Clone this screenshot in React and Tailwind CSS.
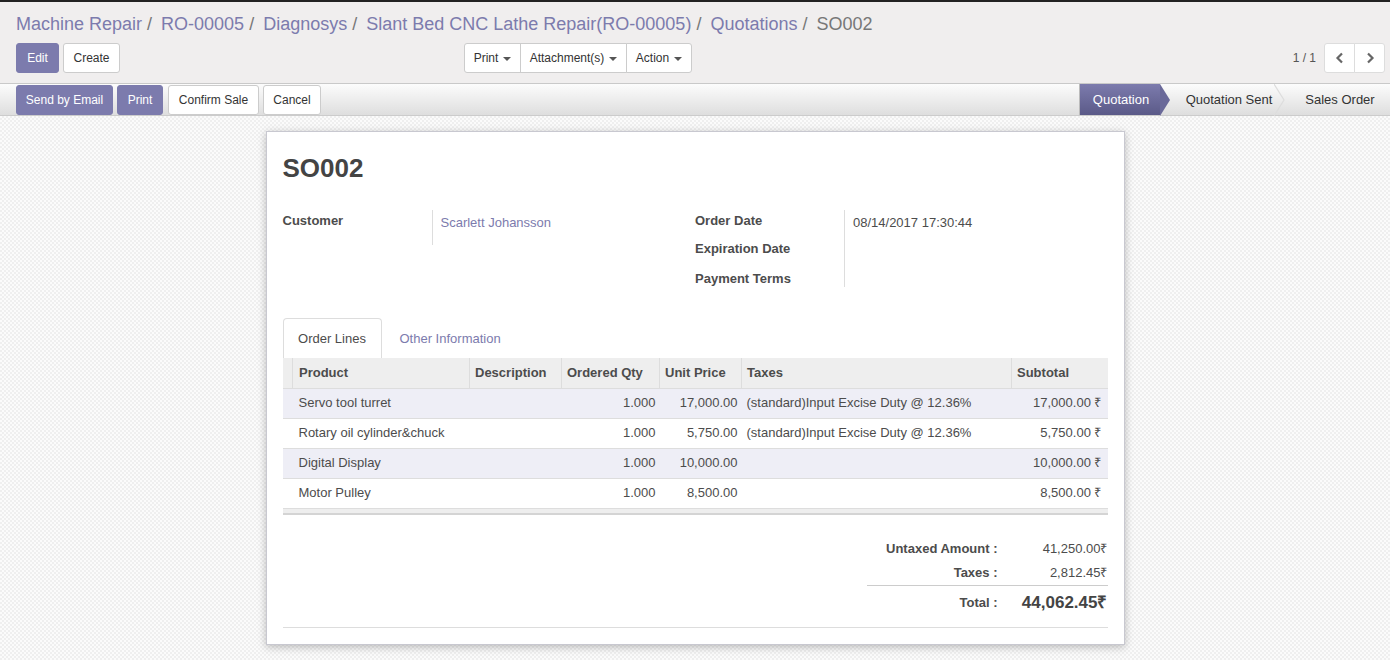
import React from "react";

function Caret() {
  return <span className="ml-[5px] inline-block h-0 w-0 border-x-[4px] border-t-[4px] border-x-transparent border-t-[#555] align-middle" />;
}

function Btn({ primary, children, className = "" }) {
  return (
    <button
      className={
        "h-[30px] whitespace-nowrap rounded-[3px] border text-center text-[12px] leading-none " +
        (primary
          ? "border-[#7c7bad] bg-[#7c7bad] text-white "
          : "border-[#ccc] bg-white text-[#333] ") +
        className
      }
    >
      {children}
    </button>
  );
}

const rows = [
  ["Servo tool turret", "1.000", "17,000.00", "(standard)Input Excise Duty @ 12.36%", "17,000.00 ₹", true],
  ["Rotary oil cylinder&chuck", "1.000", "5,750.00", "(standard)Input Excise Duty @ 12.36%", "5,750.00 ₹", false],
  ["Digital Display", "1.000", "10,000.00", "", "10,000.00 ₹", true],
  ["Motor Pulley", "1.000", "8,500.00", "", "8,500.00 ₹", false],
];

export default function App() {
  return (
    <div
      className="flex h-[660px] w-[1390px] flex-col overflow-hidden text-[13px] text-[#4c4c4c]"
      style={{ fontFamily: '"Liberation Sans", Arial, sans-serif' }}
    >
      {/* control panel */}
      <div className="border-t-2 border-b border-t-[#222] border-b-[#c9c9c9] bg-[#f0eeee] pt-[9px] pr-[5px] pb-[10px] pl-[16px]">
        <div className="flex h-[26px] items-center text-[18px] leading-[26px]">
          {["Machine Repair", "RO-00005", "Diagnosys", "Slant Bed CNC Lathe Repair(RO-00005)", "Quotations"].map((t) => (
            <React.Fragment key={t}>
              <span className="text-[#7c7bad]">{t}</span>
              <span className="mr-[9px] ml-[5px] text-[#777]">/</span>
            </React.Fragment>
          ))}
          <span className="text-[#777]">SO002</span>
        </div>
        <div className="mt-[6px] flex h-[30px] items-center">
          <div className="flex w-[448px] gap-[4px]">
            <Btn primary className="w-[43px]">Edit</Btn>
            <Btn className="w-[57px]">Create</Btn>
          </div>
          <div className="flex">
            <button className="h-[30px] w-[57px] rounded-l-[3px] border border-[#ccc] bg-white text-[12px] text-[#333]">
              Print<Caret />
            </button>
            <button className="-ml-px h-[30px] w-[107px] border border-[#ccc] bg-white text-[12px] text-[#333]">
              Attachment(s)<Caret />
            </button>
            <button className="-ml-px h-[30px] w-[66px] rounded-r-[3px] border border-[#ccc] bg-white text-[12px] text-[#333]">
              Action<Caret />
            </button>
          </div>
          <div className="ml-auto flex items-center">
            <span className="mr-[8px] text-[12px] text-[#555]">1 / 1</span>
            <div className="flex">
              <button className="flex h-[30px] w-[31px] items-center justify-center rounded-l-[3px] border border-[#ddd] bg-white">
                <svg width="10" height="12" viewBox="0 0 10 12"><path d="M7 1.5 L2.5 6 L7 10.5" stroke="#666" strokeWidth="2.2" fill="none" /></svg>
              </button>
              <button className="-ml-px flex h-[30px] w-[31px] items-center justify-center rounded-r-[3px] border border-[#ddd] bg-white">
                <svg width="10" height="12" viewBox="0 0 10 12"><path d="M3 1.5 L7.5 6 L3 10.5" stroke="#666" strokeWidth="2.2" fill="none" /></svg>
              </button>
            </div>
          </div>
        </div>
      </div>

      {/* status bar */}
      <div className="flex h-[32px] items-center border-b border-[#ccc] bg-[linear-gradient(#fcfcfc,#dedede)] pl-[16px]">
        <div className="flex gap-[4px]">
          <Btn primary className="w-[97px]">Send by Email</Btn>
          <Btn primary className="w-[46px]">Print</Btn>
          <Btn className="ml-[1px] w-[91px]">Confirm Sale</Btn>
          <Btn className="w-[58px]">Cancel</Btn>
        </div>
        <div className="ml-auto flex h-full items-stretch text-[13px]">
          <div className="relative flex w-[81px] items-center justify-center border-l border-[#bbb] bg-[linear-gradient(#7c7bad,#5b5a88)] pl-[2px] text-white">
            Quotation
            <span className="absolute top-0 -right-[10px] z-10 h-0 w-0 border-y-[16px] border-l-[10px] border-y-transparent border-l-[#6a6999]" />
          </div>
          <div className="relative flex w-[120px] items-center justify-center pl-[18px] text-[#333]">
            Quotation Sent
            <svg className="absolute top-0 -right-[6px] z-10" width="12" height="32" viewBox="0 0 12 32">
              <path d="M0 0 L10 16 L0 32" stroke="#ddd" strokeWidth="1.2" fill="none" />
            </svg>
          </div>
          <div className="flex w-[110px] items-center justify-center pl-[10px] text-[#333]">Sales Order</div>
        </div>
      </div>

      {/* sheet area */}
      <div className="flex-1 bg-[image:repeating-conic-gradient(#efefef_0%_25%,#fbfbfb_0%_50%)] bg-[length:4px_4px] pt-[15px]">
        <div className="mx-auto h-[514px] w-[859px] border border-[#c8c8d0] bg-white px-[16px] pt-[19px] shadow-[0_2px_8px_rgba(0,0,0,0.25)]">
          <h1 className="text-[26px] leading-[34px] font-bold text-[#444]">SO002</h1>

          <div className="mt-[25px] grid grid-cols-2">
            <div className="flex">
              <div className="w-[149px] pt-[1px] font-bold text-[#4c4c4c]">Customer</div>
              <div className="h-[35px] border-l border-[#ddd] pt-[3px] pl-[8px] text-[#7c7bad]">Scarlett Johansson</div>
            </div>
            <div className="flex">
              <div className="w-[149px] font-bold">
                <div className="h-[29px] pt-[1px]">Order Date</div>
                <div className="h-[30px]">Expiration Date</div>
                <div className="h-[18px]">Payment Terms</div>
              </div>
              <div className="h-[77px] border-l border-[#ddd] pt-[3px] pl-[8px]">08/14/2017 17:30:44</div>
            </div>
          </div>

          {/* tabs */}
          <div className="mt-[31px] flex h-[40px] items-stretch">
            <div className="flex w-[99px] items-center justify-center rounded-t-[4px] border border-b-0 border-[#ddd] bg-white pt-[1px]">
              Order Lines
            </div>
            <div className="flex items-center px-[18px] pt-[1px] text-[#7c7bad]">Other Information</div>
          </div>

          {/* table */}
          <table className="w-full border-collapse text-[13px]">
            <thead>
              <tr className="h-[30px] bg-[#eeeeee] text-left font-bold">
                <th className="w-[10px] border-r border-[#ddd]" />
                <th className="w-[177px] border-r border-[#ddd] pl-[6px]">Product</th>
                <th className="w-[92px] border-r border-[#ddd] pl-[5px]">Description</th>
                <th className="w-[98px] border-r border-[#ddd] pl-[5px]">Ordered Qty</th>
                <th className="w-[82px] border-r border-[#ddd] pl-[5px]">Unit Price</th>
                <th className="w-[270px] border-r border-[#ddd] pl-[5px]">Taxes</th>
                <th className="pl-[5px]">Subtotal</th>
              </tr>
            </thead>
            <tbody>
              {rows.map(([p, q, u, t, s, odd]) => (
                <tr key={p} className={"h-[30px] border-t border-[#ddd] " + (odd ? "bg-[#eeeef6]" : "bg-white")}>
                  <td />
                  <td className="pl-[6px]">{p}</td>
                  <td />
                  <td className="pr-[4px] text-right">{q}</td>
                  <td className="pr-[4px] text-right">{u}</td>
                  <td className="pl-[5px]">{t}</td>
                  <td className="pr-[6px] text-right">{s}</td>
                </tr>
              ))}
              <tr className="h-[6px] border-t border-b-2 border-[#ddd] border-b-[#d4d4d4] bg-[#eeeeee]">
                <td colSpan={7} />
              </tr>
            </tbody>
          </table>

          {/* totals */}
          <div className="mt-[22px] flex justify-end">
            <div className="w-[241px]">
              <div className="flex h-[24px] items-center">
                <div className="w-[131px] text-right font-bold">Untaxed Amount :</div>
                <div className="flex-1 text-right">41,250.00₹</div>
              </div>
              <div className="flex h-[24px] items-center">
                <div className="w-[131px] text-right font-bold">Taxes :</div>
                <div className="flex-1 text-right">2,812.45₹</div>
              </div>
              <div className="flex h-[30px] items-center border-t border-[#ccc] pt-[4px]">
                <div className="w-[131px] text-right font-bold">Total :</div>
                <div className="flex-1 text-right text-[17px] font-bold text-[#444]">44,062.45₹</div>
              </div>
            </div>
          </div>
          <div className="mt-[12px] border-t border-[#ddd]" />
        </div>
      </div>
    </div>
  );
}
